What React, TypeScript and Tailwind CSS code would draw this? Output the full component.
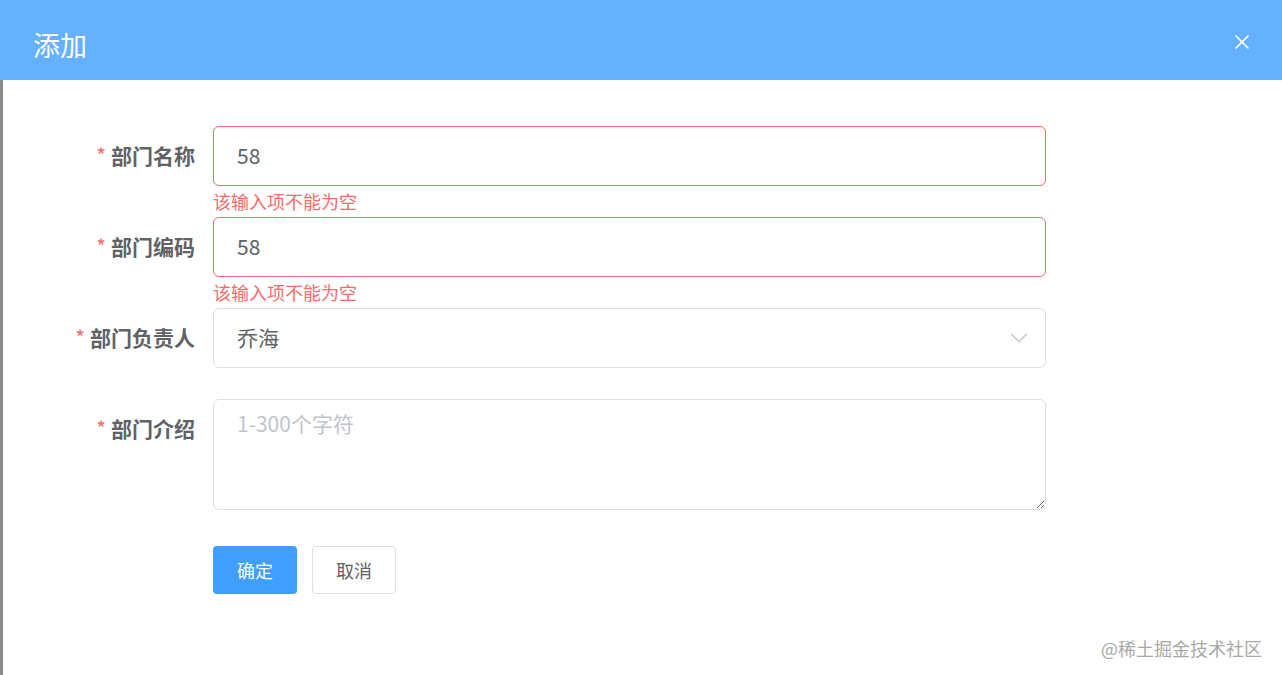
import { X, ChevronDown } from 'lucide-react';

const font = { fontFamily: '"Noto Sans CJK SC", "Noto Sans", sans-serif' };

function Label({ text }: { text: string }) {
  return (
    <div className="w-[180px] shrink-0 pr-[18px] text-right text-[21px] leading-[58px] font-bold text-[#606266]">
      <span className="text-[#f56c6c] mr-[5px] font-normal">*</span>
      {text}
    </div>
  );
}

function ErrorSlot({ msg, h = 31 }: { msg?: string; h?: number }) {
  return (
    <div className="text-[18px] leading-none text-[#f56c6c] pt-[6px]" style={{ height: h }}>
      {msg}
    </div>
  );
}

export default function App() {
  return (
    <div className="w-[1282px] h-[675px] bg-white flex flex-col overflow-hidden" style={font}>
      <header className="h-[80px] shrink-0 bg-[#66b1ff] flex items-center justify-between pl-[33px] pr-[28px] pt-[8px]">
        <h1 className="text-[27px] text-white leading-none">添加</h1>
        <X size={24} strokeWidth={1.7} className="text-white -mt-[4px]" />
      </header>

      <div className="relative flex-1 border-l-[3px] border-[#8a8a8a] pl-[30px] pt-[46px]">
        <div className="flex">
          <Label text="部门名称" />
          <div>
            <div className="w-[833px] h-[60px] border border-[#f56c6c] rounded-[6px] px-[23px] flex items-center text-[21px] text-[#606266]">
              58
            </div>
            <ErrorSlot msg="该输入项不能为空" />
          </div>
        </div>

        <div className="flex">
          <Label text="部门编码" />
          <div>
            <div className="w-[833px] h-[60px] border border-[#f56c6c] rounded-[6px] px-[23px] flex items-center text-[21px] text-[#606266]">
              58
            </div>
            <ErrorSlot msg="该输入项不能为空" />
          </div>
        </div>

        <div className="flex">
          <Label text="部门负责人" />
          <div>
            <div className="w-[833px] h-[60px] border border-[#dcdfe6] rounded-[6px] pl-[23px] pr-[11px] flex items-center justify-between text-[21px] text-[#606266]">
              <span>乔海</span>
              <ChevronDown size={30} strokeWidth={1} className="text-[#c0c4cc]" />
            </div>
            <ErrorSlot />
          </div>
        </div>

        <div className="flex">
          <Label text="部门介绍" />
          <div>
            <textarea
              placeholder="1-300个字符"
              className="block w-[833px] h-[111px] border border-[#dcdfe6] rounded-[6px] px-[23px] py-[8px] text-[21px] leading-[1.5] text-[#606266] placeholder:text-[#c0c4cc] outline-none resize-y"
              style={font}
            />
            <div className="h-[36px]" />
          </div>
        </div>

        <div className="flex">
          <div className="w-[180px] shrink-0" />
          <div className="flex gap-[15px]">
            <button className="w-[84px] h-[48px] rounded-[4px] bg-[#409eff] text-white text-[18px]">确定</button>
            <button className="w-[84px] h-[48px] rounded-[4px] border border-[#dcdfe6] bg-white text-[#606266] text-[18px]">取消</button>
          </div>
        </div>

        <div className="absolute right-[20px] bottom-[18px] text-[18px] leading-none text-[#a8a8a8]">
          @稀土掘金技术社区
        </div>
      </div>
    </div>
  );
}
